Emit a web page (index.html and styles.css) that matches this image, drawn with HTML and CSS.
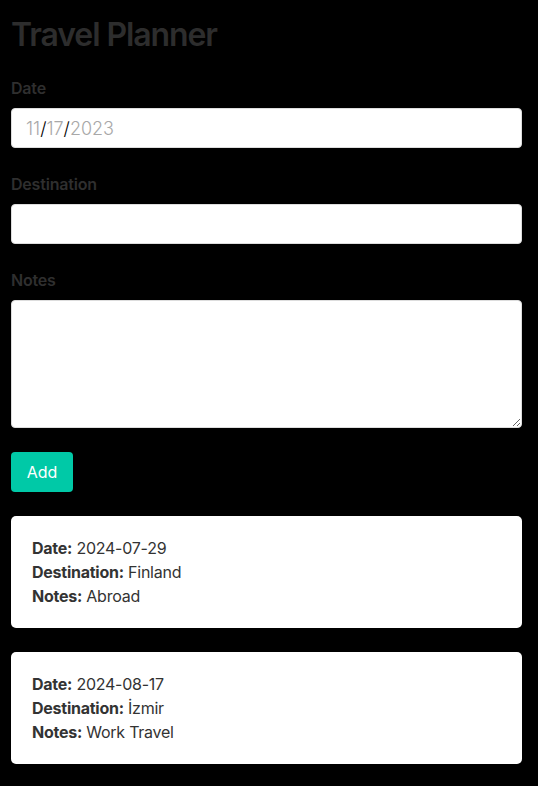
FILE: index.html
```html
<!DOCTYPE html>
<html lang="en">
<head>
<meta charset="utf-8">
<title>Travel Planner</title>
<link rel="stylesheet" href="styles.css">
</head>
<body>
<div class="app">
  <h1 class="title">Travel Planner</h1>
  <form class="form">
    <div class="field">
      <label class="label">Date</label>
      <div class="input date-input"><span class="dim">11</span>/<span class="dim">17</span>/<span class="dim">2023</span></div>
    </div>
    <div class="field">
      <label class="label" for="dest">Destination</label>
      <input class="input" id="dest" type="text">
    </div>
    <div class="field">
      <label class="label" for="notes">Notes</label>
      <textarea class="input textarea" id="notes"></textarea>
    </div>
    <button class="btn" type="button">Add</button>
  </form>
  <div class="list">
    <div class="card">
      <div class="line"><b>Date:</b> 2024-07-29</div>
      <div class="line"><b>Destination:</b> Finland</div>
      <div class="line"><b>Notes:</b> Abroad</div>
    </div>
    <div class="card">
      <div class="line"><b>Date:</b> 2024-08-17</div>
      <div class="line"><b>Destination:</b> İzmir</div>
      <div class="line"><b>Notes:</b> Work Travel</div>
    </div>
  </div>
</div>
</body>
</html>
```

FILE: styles.css
```css
html, body {
  margin: 0;
  padding: 0;
  background: #000;
}
body {
  font-family: Inter, "Noto Sans", sans-serif;
  color: #333;
}
.app {
  width: 511px;
  margin-left: 11px;
  padding-top: 15px;
}
.title {
  margin: 0 0 24px 0;
  font-size: 32px;
  line-height: 39px;
  font-weight: 600;
  letter-spacing: -1.1px;
  color: #2d2d2d;
}
.form {
  display: flex;
  flex-direction: column;
}
.field {
  display: flex;
  flex-direction: column;
  margin-bottom: 26px;
}
.field:nth-child(3) {
  margin-bottom: 24px;
}
.label {
  font-size: 16px;
  line-height: 20px;
  font-weight: 600;
  letter-spacing: -0.2px;
  color: #2f2f2f;
  margin-bottom: 10px;
}
.input {
  box-sizing: border-box;
  display: block;
  width: 100%;
  height: 40px;
  margin: 0;
  padding: 0 15px;
  border: 1px solid #ddd;
  border-radius: 4px;
  background: #fff;
  font-family: Inter, sans-serif;
  font-size: 16px;
  color: #000;
  outline: none;
}
.date-input {
  display: flex;
  align-items: center;
  font-size: 18px;
  font-weight: 300;
  color: #000;
  padding-left: 14px;
}
.dim {
  color: #a8a8a8;
}
.textarea {
  height: 128px;
  padding: 10px 15px;
  resize: vertical;
}
.btn {
  align-self: flex-start;
  width: 62px;
  height: 40px;
  padding: 0;
  border: none;
  border-radius: 4px;
  background: #00c9a7;
  color: #fff;
  font-family: Inter, sans-serif;
  font-size: 16px;
  cursor: pointer;
  margin-bottom: 24px;
}
.list {
  display: flex;
  flex-direction: column;
  gap: 24px;
}
.card {
  background: #fff;
  border-radius: 5px;
  padding: 20px 21px;
}
.line {
  font-size: 16px;
  line-height: 24px;
  letter-spacing: -0.25px;
  color: #333;
}
.line b {
  font-weight: 700;
}
```
